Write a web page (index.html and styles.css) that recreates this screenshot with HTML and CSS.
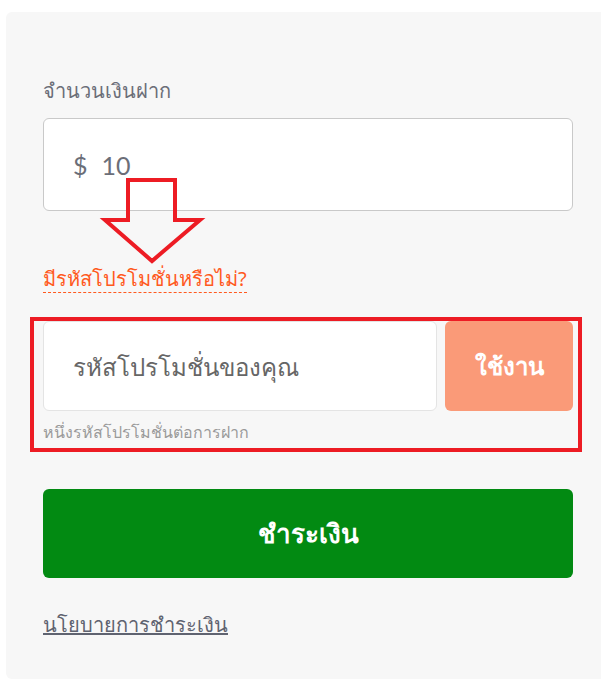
FILE: index.html
```html
<!DOCTYPE html>
<html lang="th">
<head>
<meta charset="UTF-8">
<title>ฝากเงิน</title>
<link rel="stylesheet" href="styles.css">
</head>
<body>
    <div class="panel">
        <label class="field-label">จำนวนเงินฝาก</label>
        <div class="amount-box">
            <span class="currency">$</span>
            <span class="amount">10</span>
        </div>

        <a class="promo-toggle" href="#">มีรหัสโปรโมชั่นหรือไม่?</a>

        <!-- Promo code -->
        <div class="promo">
            <div class="promo-row">
                <input class="promo-input" type="text" placeholder="รหัสโปรโมชั่นของคุณ">
                <button class="promo-btn">ใช้งาน</button>
            </div>
            <p class="promo-hint">หนึ่งรหัสโปรโมชั่นต่อการฝาก</p>
        </div>

        <button class="pay-btn">ชำระเงิน</button>

        <a class="policy" href="#">นโยบายการชำระเงิน</a>
    </div>

    <!-- Annotation overlay -->
    <svg class="annotations" width="601" height="679" viewBox="0 0 601 679">
        <polygon points="128,180 175,180 175,220 200,220 152,261 105,220 128,220" fill="none" stroke="#ed1c24" stroke-width="4" stroke-linejoin="miter"/>
        <rect x="32" y="319" width="548" height="131" fill="none" stroke="#ed1c24" stroke-width="4"/>
    </svg>
</body>
</html>
```

FILE: styles.css
```css
body {
    margin: 0;
    padding: 0;
    background-color: #fff;
    font-family: "Noto Sans", "Liberation Sans", sans-serif;
    overflow: hidden;
}

.panel {
    margin: 12px 0 0 6px;
    width: 620px;
    height: 667px;
    box-sizing: border-box;
    padding: 66px 0 0 37px;
    background-color: #f7f7f7;
    border-radius: 6px;
    display: flex;
    flex-direction: column;
    align-items: flex-start;
}

.field-label {
    font-size: 20px;
    line-height: 26px;
    color: #6b6e78;
    margin-bottom: 14px;
}

.amount-box {
    width: 530px;
    height: 93px;
    box-sizing: border-box;
    border: 1px solid #c9c9c9;
    border-radius: 6px;
    background-color: #fff;
    display: flex;
    align-items: center;
    padding-left: 29px;
    gap: 14px;
    font-family: Lato, "Open Sans", sans-serif;
    font-size: 25px;
    color: #6b6e78;
}

.promo-toggle {
    margin-top: 55px;
    font-size: 20px;
    line-height: 26px;
    color: #ff5a1f;
    text-decoration: none;
    border-bottom: 1px dashed #ff5a1f;
}

/* Promo code styles */
.promo {
    margin-top: 28px;
    width: 530px;
}

.promo-row {
    display: flex;
    gap: 8px;
    height: 90px;
}

.promo-input {
    flex: 1;
    box-sizing: border-box;
    border: 1px solid #e4e4e4;
    border-radius: 6px;
    background-color: #fff;
    padding: 0 0 0 29px;
    font-family: inherit;
    font-size: 24px;
    color: #555;
    outline: none;
}

.promo-input::placeholder {
    color: #666;
}

.promo-btn {
    width: 128px;
    border: none;
    border-radius: 6px;
    background-color: #fa9a78;
    color: #fff;
    font-family: inherit;
    font-size: 24px;
    font-weight: bold;
}

.promo-hint {
    margin: 10px 0 0;
    font-size: 16px;
    line-height: 22px;
    color: #9a9a9a;
}

.pay-btn {
    margin-top: 46px;
    width: 530px;
    height: 89px;
    border: none;
    border-radius: 6px;
    background-color: #028a12;
    color: #fff;
    font-family: inherit;
    font-size: 26px;
    font-weight: bold;
}

.policy {
    margin-top: 34px;
    font-size: 20px;
    line-height: 26px;
    color: #5f6370;
    text-decoration: underline;
    text-decoration-thickness: 2px;
}

.annotations {
    position: absolute;
    top: 0;
    left: 0;
    pointer-events: none;
}
```
